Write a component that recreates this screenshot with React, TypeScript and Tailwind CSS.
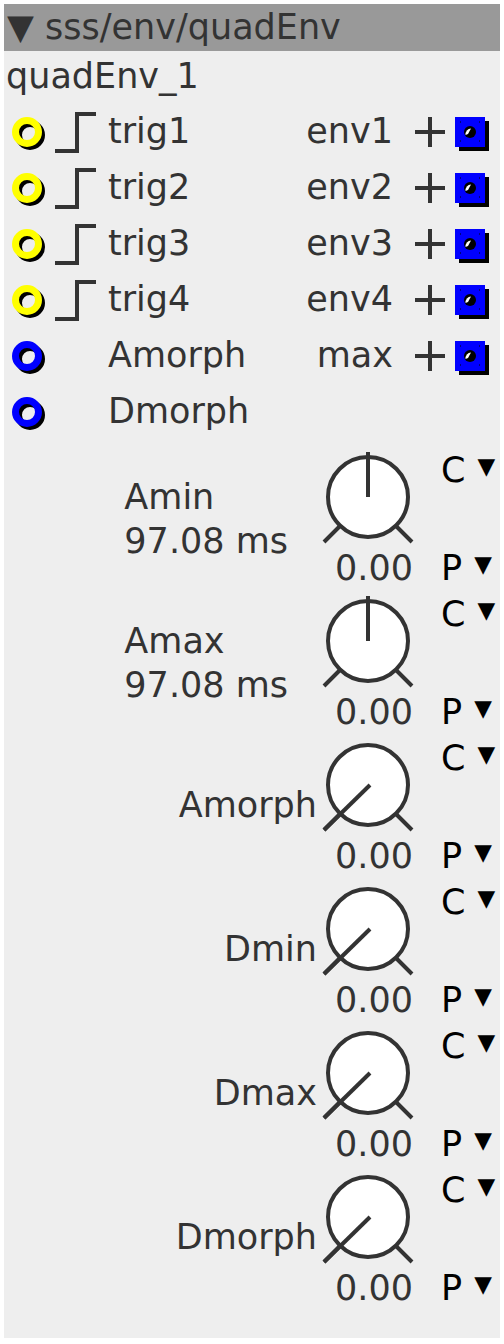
const font = { fontFamily: '"DejaVu Sans", Verdana, sans-serif' };

type Port = { color: string; step: boolean; label: string; out?: string };

const ports: Port[] = [
  { color: '#ffff00', step: true, label: 'trig1', out: 'env1' },
  { color: '#ffff00', step: true, label: 'trig2', out: 'env2' },
  { color: '#ffff00', step: true, label: 'trig3', out: 'env3' },
  { color: '#ffff00', step: true, label: 'trig4', out: 'env4' },
  { color: '#0000ff', step: false, label: 'Amorph', out: 'max' },
  { color: '#0000ff', step: false, label: 'Dmorph' },
];

type Knob = { label: string; sub?: string; top: boolean };

const knobs: Knob[] = [
  { label: 'Amin', sub: '97.08 ms', top: true },
  { label: 'Amax', sub: '97.08 ms', top: true },
  { label: 'Amorph', top: false },
  { label: 'Dmin', top: false },
  { label: 'Dmax', top: false },
  { label: 'Dmorph', top: false },
];

function PortIcon({ color }: { color: string }) {
  return (
    <svg width="40" height="40" viewBox="0 0 40 40" className="ml-[4px]">
      <circle cx="22" cy="23" r="11.5" fill="none" stroke="#000" strokeWidth="7" />
      <circle cx="19" cy="20" r="11.5" fill="none" stroke={color} strokeWidth="7" />
    </svg>
  );
}

function StepIcon() {
  return (
    <svg width="48" height="56" viewBox="0 0 48 56">
      <path d="M3 47 H25 V10 H44" fill="none" stroke="#333" strokeWidth="4" />
    </svg>
  );
}

function PlusIcon() {
  return (
    <svg width="30" height="30" viewBox="0 0 30 30">
      <path d="M0 15 H30 M15 0 V30" stroke="#333" strokeWidth="4" />
    </svg>
  );
}

function OutBox() {
  return (
    <svg width="36" height="36" viewBox="0 0 36 36">
      <rect x="4" y="4" width="30" height="30" fill="#000" />
      <rect x="0" y="0" width="30" height="30" fill="#0000ff" />
      <circle cx="15" cy="15" r="6" fill="#000" />
      <path d="M10.5 18 A6 6 0 0 1 16 11.5 L13 17 Z" fill="#fff" />
      <path d="M5 5 h1 M24 5 h1 M5 24 h1 M24 24 h1" stroke="#000" strokeWidth="1" />
    </svg>
  );
}

function KnobDial({ top }: { top: boolean }) {
  return (
    <svg width="96" height="100" viewBox="0 0 96 100">
      <circle cx="48" cy="49" r="40" fill="#fff" stroke="#333" strokeWidth="4" />
      <path d="M4 94 L20 78 M92 94 L76 78" stroke="#333" strokeWidth="4" />
      {top ? (
        <path d="M48 4 V49" stroke="#333" strokeWidth="4" />
      ) : (
        <path d="M50 49 L4 94" stroke="#333" strokeWidth="4" />
      )}
    </svg>
  );
}

export default function App() {
  return (
    <div className="bg-white pl-[4px] pt-[4px] pb-[6px] w-[504px]" style={font}>
      <div className="w-[496px] bg-[#eeeeee] text-[#333333] text-[35px] leading-none">
        {/* Header */}
        <div className="h-[47px] bg-[#999999] flex items-center pl-[3px] whitespace-pre">
          ▼ sss/env/quadEnv
        </div>

        {/* Instance name */}
        <div className="h-[53px] flex items-center pl-[2px] pb-[2px]">quadEnv_1</div>

        {/* Ports */}
        <div className="flex flex-col">
          {ports.map(p => (
            <div key={p.label} className="h-[56px] flex items-center">
              <div className="w-[48px] flex items-center">
                <PortIcon color={p.color} />
              </div>
              <div className="w-[48px]">{p.step && <StepIcon />}</div>
              <div className="ml-[8px] flex-1 pb-[2px]">{p.label}</div>
              {p.out && (
                <>
                  <div className="pb-[2px]">{p.out}</div>
                  <div className="ml-[22px] flex items-center"><PlusIcon /></div>
                  <div className="ml-[10px] mr-[9px] pt-[6px]"><OutBox /></div>
                </>
              )}
            </div>
          ))}
        </div>

        {/* Knobs */}
        <div className="mt-[8px] pb-[26px]">
          {knobs.map(k => (
            <div key={k.label} className="h-[144px] flex">
              <div className={`flex-1 flex items-center justify-end ${k.sub ? 'pr-[32px] pb-[2px]' : 'pr-[3px] pb-[6px]'}`}>
                {k.sub ? (
                  <div className="leading-[44px]">
                    <div>{k.label}</div>
                    <div>{k.sub}</div>
                  </div>
                ) : (
                  <div>{k.label}</div>
                )}
              </div>
              <div className="w-[96px] flex flex-col">
                <KnobDial top={k.top} />
                <div className="h-[40px] flex items-center justify-end pr-[3px]">0.00</div>
              </div>
              <div className="w-[84px] flex flex-col justify-between pl-[25px] text-black">
                <div className="h-[44px] flex items-center whitespace-pre">
                  C <span className="text-[23px] ml-[1px] -mt-[8px]">▼</span>
                </div>
                <div className="h-[40px] mb-[4px] flex items-center whitespace-pre">
                  P <span className="text-[23px] ml-[1px] -mt-[8px]">▼</span>
                </div>
              </div>
            </div>
          ))}
        </div>
      </div>
    </div>
  );
}
